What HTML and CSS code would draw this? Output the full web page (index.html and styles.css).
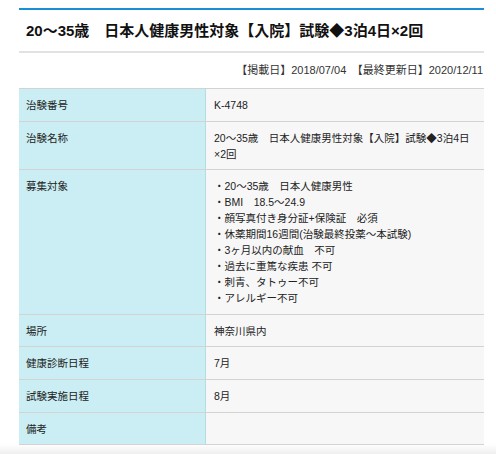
FILE: index.html
```html
<!DOCTYPE html>
<html lang="ja">
<head>
<meta charset="utf-8">
<link rel="stylesheet" href="styles.css">
</head>
<body>
<div class="page">
  <h1 class="title">20〜35歳　日本人健康男性対象【入院】試験◆3泊4日×2回</h1>
  <p class="dates">【掲載日】2018/07/04　【最終更新日】2020/12/11</p>
  <table class="info">
    <tr><th>治験番号</th><td>K-4748</td></tr>
    <tr><th>治験名称</th><td>20〜35歳　日本人健康男性対象【入院】試験◆3泊4日×2回</td></tr>
    <tr><th>募集対象</th><td>
      ・20〜35歳　日本人健康男性<br>
      ・BMI　18.5〜24.9<br>
      ・顔写真付き身分証+保険証　必須<br>
      ・休薬期間16週間(治験最終投薬〜本試験)<br>
      ・3ヶ月以内の献血　不可<br>
      ・過去に重篤な疾患 不可<br>
      ・刺青、タトゥー不可<br>
      ・アレルギー不可
    </td></tr>
    <tr><th>場所</th><td>神奈川県内</td></tr>
    <tr><th>健康診断日程</th><td>7月</td></tr>
    <tr><th>試験実施日程</th><td>8月</td></tr>
    <tr><th>備考</th><td></td></tr>
  </table>
</div>
</body>
</html>
```
FILE: styles.css
```css
html {
  background: #ffffff;
}
html, body {
  margin: 0;
  padding: 0;
}
body {
  min-height: 454px;
  font-family: "Liberation Sans", "Noto Sans CJK JP", sans-serif;
  color: #222;
  background: linear-gradient(to bottom, #fff 0, #fff 444px, #efefef 454px);
}
.page {
  margin: 8px 12px 0 19px;
}
.title {
  margin: 0;
  border-top: 2px solid #1a8fd6;
  border-bottom: 2px solid #e2e2e2;
  padding: 10px 7px 9px;
  font-size: 15px;
  line-height: 22px;
  font-weight: 700;
  color: #111;
}
.dates {
  margin: 0;
  padding: 11px 1px 0 0;
  height: 24px;
  text-align: right;
  font-size: 11px;
  line-height: 13px;
  color: #333;
}
.info {
  width: 100%;
  border-collapse: collapse;
  font-size: 10.5px;
  line-height: 16px;
}
.info th, .info td {
  vertical-align: top;
  text-align: left;
  font-weight: 400;
  padding: 8px 8px 7.6px 7px;
  border-top: 1px solid #d3d3d3;
  border-bottom: 1px solid #d3d3d3;
}
.info th {
  width: 171px;
  background: #caeef3;
  border-right: 1px solid #b3dde3;
  color: #222;
}
.info td {
  background: #f7f7f7;
  padding-left: 8px;
  color: #222;
}
```
